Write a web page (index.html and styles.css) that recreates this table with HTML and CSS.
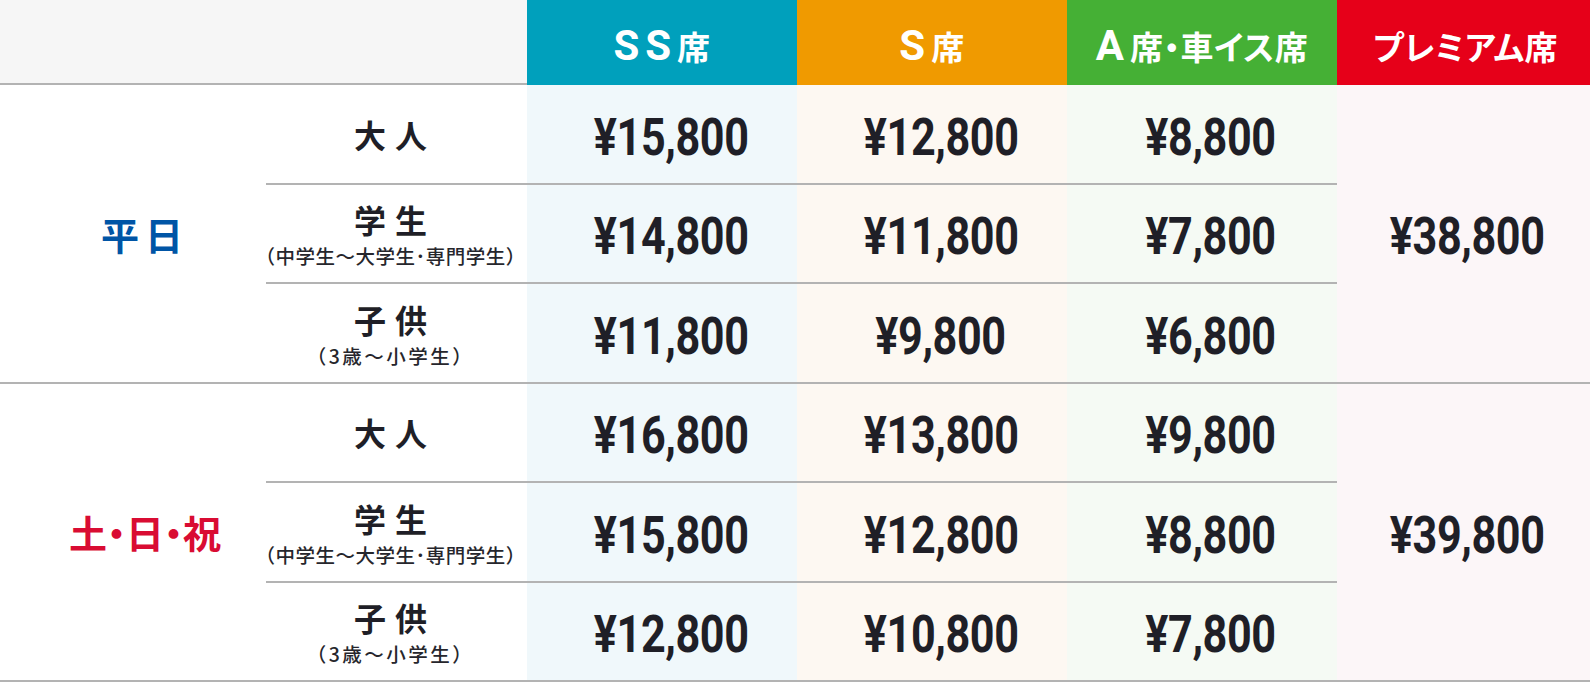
FILE: index.html
```html
<!DOCTYPE html>
<html lang="ja">
<head>
<meta charset="utf-8">
<title>料金表</title>
<link rel="stylesheet" href="styles.css">
</head>
<body>
<div class="table">
  <div class="corner"></div>
  <div class="head ss"><span class="lat">SS</span>席</div>
  <div class="head s"><span class="lat">S</span>席</div>
  <div class="head a"><span class="lat">A</span>席・車イス席</div>
  <div class="head p">プレミアム席</div>

  <div class="group weekday g1"><span class="gtext">平日</span></div>
  <div class="sub r1"><span class="main">大人</span></div>
  <div class="price ss-bg r1"><span class="num">¥15,800</span></div>
  <div class="price s-bg r1"><span class="num">¥12,800</span></div>
  <div class="price a-bg r1"><span class="num">¥8,800</span></div>
  <div class="premium g1"><span class="num">¥38,800</span></div>

  <div class="sub r2"><span class="main">学生</span><span class="note">（中学生〜大学生･専門学生）</span></div>
  <div class="price ss-bg r2"><span class="num">¥14,800</span></div>
  <div class="price s-bg r2"><span class="num">¥11,800</span></div>
  <div class="price a-bg r2"><span class="num">¥7,800</span></div>

  <div class="sub r3"><span class="main">子供</span><span class="note short">（3歳〜小学生）</span></div>
  <div class="price ss-bg r3"><span class="num">¥11,800</span></div>
  <div class="price s-bg r3"><span class="num">¥9,800</span></div>
  <div class="price a-bg r3"><span class="num">¥6,800</span></div>

  <div class="group holiday g2"><span class="gtext">土・日・祝</span></div>
  <div class="sub r4"><span class="main">大人</span></div>
  <div class="price ss-bg r4"><span class="num">¥16,800</span></div>
  <div class="price s-bg r4"><span class="num">¥13,800</span></div>
  <div class="price a-bg r4"><span class="num">¥9,800</span></div>
  <div class="premium g2"><span class="num">¥39,800</span></div>

  <div class="sub r5"><span class="main">学生</span><span class="note">（中学生〜大学生･専門学生）</span></div>
  <div class="price ss-bg r5"><span class="num">¥15,800</span></div>
  <div class="price s-bg r5"><span class="num">¥12,800</span></div>
  <div class="price a-bg r5"><span class="num">¥8,800</span></div>

  <div class="sub r6"><span class="main">子供</span><span class="note short">（3歳〜小学生）</span></div>
  <div class="price ss-bg r6"><span class="num">¥12,800</span></div>
  <div class="price s-bg r6"><span class="num">¥10,800</span></div>
  <div class="price a-bg r6"><span class="num">¥7,800</span></div>
</div>
</body>
</html>
```

FILE: styles.css
```css
* { box-sizing: border-box; }
html, body { margin: 0; padding: 0; background: #fff; }
body {
  font-family: "Noto Sans CJK JP", "Noto Sans", sans-serif;
  color: #1f1f27;
}
.table {
  display: grid;
  grid-template-columns: 266px 261px 270px 270px 270px 1fr;
  grid-template-rows: 85px repeat(6, 99.5px);
  width: 1590px;
}
.corner {
  grid-column: 1 / 3;
  grid-row: 1;
  background: #f6f6f6;
  border-bottom: 2px solid #b3b3b3;
}
.head {
  grid-row: 1;
  display: flex;
  align-items: center;
  justify-content: center;
  color: #fff;
  font-weight: 700;
  font-size: 33px;
  letter-spacing: 0.5px;
  font-feature-settings: "palt";
  padding: 6px 0 0 0;
  white-space: nowrap;
}
.head .lat {
  font-family: Roboto, "Liberation Sans", sans-serif;
  font-weight: 700;
  font-size: 42px;
  letter-spacing: 6px;
  line-height: 1;
}
.head.ss { background: #00a0bc; }
.head.s { background: #f09a00; }
.head.a { background: #45b035; }
.head.p { background: #e60019; padding-left: 4px; }

.group {
  grid-column: 1;
  display: flex;
  align-items: center;
  justify-content: center;
  padding-left: 18px;
  font-weight: 700;
  font-size: 38px;
  border-bottom: 2px solid #b3b3b3;
  font-feature-settings: "palt";
  white-space: nowrap;
}
.weekday .gtext { letter-spacing: 6px; margin-right: -6px; }
.holiday .gtext { letter-spacing: 0; }
.holiday { padding-left: 24px; }
.g1 { grid-row: 2 / 5; }
.g2 { grid-row: 5 / 8; }
.weekday { color: #0055a6; }
.holiday { color: #d90c33; }

.r1 { grid-row: 2; }
.r2 { grid-row: 3; }
.r3 { grid-row: 4; }
.r4 { grid-row: 5; }
.r5 { grid-row: 6; }
.r6 { grid-row: 7; }

.sub {
  grid-column: 2;
  display: flex;
  flex-direction: column;
  align-items: center;
  justify-content: center;
  padding-right: 12px;
  border-bottom: 2px solid #b3b3b3;
  white-space: nowrap;
}
.sub .main {
  font-weight: 700;
  font-size: 32px;
  line-height: 46px;
  letter-spacing: 9px;
  margin-right: -9px;
}
.sub .note {
  font-weight: 500;
  font-size: 19.5px;
  line-height: 28px;
  letter-spacing: 0.5px;
  color: #26262c;
}
.sub .note.short { letter-spacing: 2.5px; }

.price,
.premium {
  display: flex;
  align-items: center;
  justify-content: center;
  border-bottom: 2px solid #b3b3b3;
  padding-top: 8px;
}
.price { padding-left: 18px; }
.num {
  display: inline-block;
  font-family: Roboto, "Liberation Sans", sans-serif;
  font-weight: 700;
  font-size: 52px;
  line-height: 1;
  letter-spacing: -0.5px;
  transform: scaleX(0.83);
  white-space: nowrap;
}
.ss-bg { grid-column: 3; background: #f0f8fb; }
.s-bg { grid-column: 4; background: #fdf8f2; }
.a-bg { grid-column: 5; background: #f5faf4; }

.premium {
  grid-column: 6;
  padding-left: 8px;
  background: #fcf6f8;
}
```
